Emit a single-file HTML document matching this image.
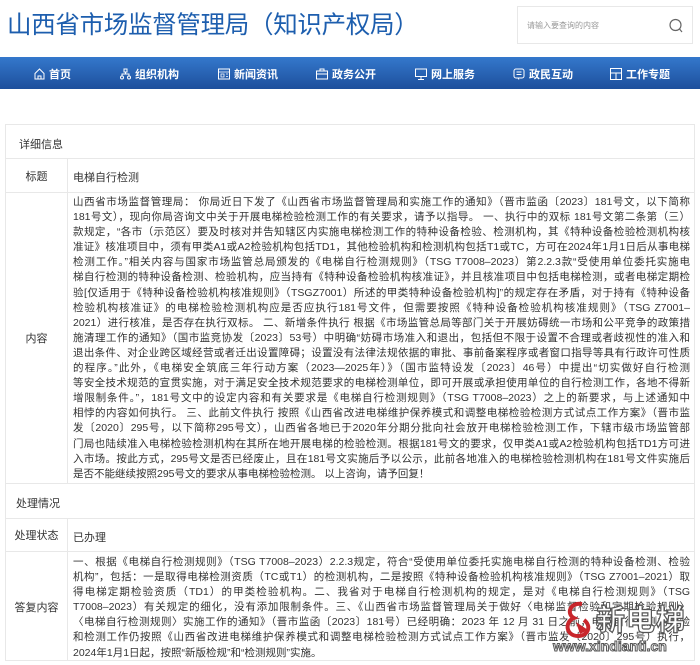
<!DOCTYPE html>
<html><head><meta charset="utf-8">
<style>
*{margin:0;padding:0;box-sizing:border-box}
body{width:700px;height:665px;background:#fff;font-family:"Liberation Sans","Noto Sans CJK SC",sans-serif;color:#333;position:relative;overflow:hidden}
.title{position:absolute;left:7px;top:6px;font-size:24.5px;color:#1d5eae;letter-spacing:-0.3px;font-weight:normal;white-space:nowrap}
.search{position:absolute;left:517px;top:6px;width:176px;height:38px;border:1px solid #e8e8e8;background:#fff}
.search span{position:absolute;left:9px;top:13px;font-size:8px;color:#999}
.search svg{position:absolute;left:150px;top:10px}
.nav{position:absolute;left:0;top:57px;width:700px;height:32px;background:linear-gradient(#3478cc,#1d4f9c);}
.nav .it{position:absolute;top:9px;color:#fff;font-size:11px;font-weight:bold;white-space:nowrap;display:flex;align-items:center;gap:4px}
.nav svg{display:block}
.box{position:absolute;left:5px;top:124px;width:690px;height:537px;border:1px solid #e8e8e8}
.row{position:absolute;left:0;width:688px;border-bottom:1px solid #e8e8e8}
.lab{position:absolute;left:0;top:0;bottom:0;width:62px;border-right:1px solid #e8e8e8;font-size:11px;display:flex;align-items:center;justify-content:center}
.val{position:absolute;left:67px;right:4px;font-size:11px}
.txt{font-size:10.5px}
.txt div{white-space:nowrap;text-align:justify;text-align-last:justify;height:15.1px;line-height:15.1px;overflow:hidden}
.txt div.l{text-align-last:left}
.hdr{font-size:11px;position:absolute;left:13px}
.wm1{position:absolute;left:596px;top:597px;font-size:29px;font-weight:bold;color:#fff;-webkit-text-stroke:1.2px #555;letter-spacing:1px}
.wm2{position:absolute;left:553px;top:638px;font-size:14px;font-weight:bold;color:#fff;-webkit-text-stroke:1px #555}
</style></head><body>
<div class="title">山西省市场监督管理局（知识产权局）</div>
<div class="search"><span>请输入要查询的内容</span>
<svg width="16" height="18" viewBox="0 0 16 18"><circle cx="7.5" cy="8" r="5.5" fill="none" stroke="#666" stroke-width="1.2"/><line x1="11.5" y1="12" x2="14" y2="15" stroke="#666" stroke-width="1.2"/></svg></div>
<div class="nav">
<div class="it" style="left:34px"><svg width="11" height="12" viewBox="0 0 11 12"><path d="M1 5.5L5.5 1L10 5.5V11H1Z M4 11V8H7V11" fill="none" stroke="#fff" stroke-width="1"/></svg>首页</div>
<div class="it" style="left:120px"><svg width="11" height="12" viewBox="0 0 11 12"><rect x="4" y="1" width="3" height="3" fill="none" stroke="#fff"/><path d="M5.5 4V6M2 8V6H9V8" fill="none" stroke="#fff"/><circle cx="2" cy="9.5" r="1.5" fill="none" stroke="#fff"/><circle cx="9" cy="9.5" r="1.5" fill="none" stroke="#fff"/></svg>组织机构</div>
<div class="it" style="left:218px"><svg width="12" height="12" viewBox="0 0 12 12"><rect x="0.5" y="1" width="11" height="10" fill="none" stroke="#fff"/><path d="M0.5 4H11.5M3 6H6V9H3ZM8 6H10M8 8.5H10" fill="none" stroke="#fff" stroke-width="0.8"/></svg>新闻资讯</div>
<div class="it" style="left:316px"><svg width="12" height="12" viewBox="0 0 12 12"><rect x="0.5" y="3" width="11" height="8" fill="none" stroke="#fff"/><path d="M4 3V1H8V3M0.5 6H11.5" fill="none" stroke="#fff"/></svg>政务公开</div>
<div class="it" style="left:415px"><svg width="12" height="12" viewBox="0 0 12 12"><rect x="0.5" y="1" width="11" height="7.5" fill="none" stroke="#fff"/><path d="M6 8.5V11M3 11.5H9" fill="none" stroke="#fff"/></svg>网上服务</div>
<div class="it" style="left:513px"><svg width="12" height="12" viewBox="0 0 12 12"><rect x="1" y="1" width="10" height="9" rx="2" fill="none" stroke="#fff"/><path d="M3.5 4H8.5M3.5 6.5H8.5M5 10L6 11.5" fill="none" stroke="#fff" stroke-width="0.9"/></svg>政民互动</div>
<div class="it" style="left:610px"><svg width="12" height="12" viewBox="0 0 12 12"><rect x="0.5" y="0.5" width="11" height="11" fill="none" stroke="#fff"/><path d="M0.5 5H11.5M6 5V11.5" fill="none" stroke="#fff"/></svg>工作专题</div>
</div>

<div class="box">
<div class="row" style="top:0;height:34px"><div class="hdr" style="top:11px">详细信息</div></div>
<div class="row" style="top:34px;height:34px"><div class="lab">标题</div><div class="val" style="top:10px">电梯自行检测</div></div>
<div class="row" style="top:68px;height:291px"><div class="lab">内容</div>
<div class="val txt" style="top:2px">
<div>山西省市场监督管理局： 你局近日下发了《山西省市场监督管理局和实施工作的通知》（晋市监函〔2023〕181号文，以下简称</div>
<div>181号文），现向你局咨询文中关于开展电梯检验检测工作的有关要求，请予以指导。 一、执行中的双标 181号文第二条第（三）</div>
<div>款规定，“各市（示范区）要及时核对并告知辖区内实施电梯检测工作的特种设备检验、检测机构，其《特种设备检验检测机构核</div>
<div>准证》核准项目中，须有甲类A1或A2检验机构包括TD1，其他检验机构和检测机构包括T1或TC，方可在2024年1月1日后从事电梯</div>
<div>检测工作。”相关内容与国家市场监管总局颁发的《电梯自行检测规则》（TSG T7008–2023）第2.2.3款“受使用单位委托实施电</div>
<div>梯自行检测的特种设备检测、检验机构，应当持有《特种设备检验机构核准证》，并且核准项目中包括电梯检测，或者电梯定期检</div>
<div>验[仅适用于《特种设备检验机构核准规则》（TSGZ7001）所述的甲类特种设备检验机构]”的规定存在矛盾，对于持有《特种设备</div>
<div>检验机构核准证》的电梯检验检测机构应是否应执行181号文件，但需要按照《特种设备检验机构核准规则》（TSG Z7001–</div>
<div>2021）进行核准，是否存在执行双标。 二、新增条件执行 根据《市场监管总局等部门关于开展妨碍统一市场和公平竞争的政策措</div>
<div>施清理工作的通知》（国市监竞协发〔2023〕53号）中明确“妨碍市场准入和退出，包括但不限于设置不合理或者歧视性的准入和</div>
<div>退出条件、对企业跨区域经营或者迁出设置障碍；设置没有法律法规依据的审批、事前备案程序或者窗口指导等具有行政许可性质</div>
<div>的程序。”此外，《电梯安全筑底三年行动方案（2023—2025年）》（国市监特设发〔2023〕46号）中提出“切实做好自行检测</div>
<div>等安全技术规范的宣贯实施，对于满足安全技术规范要求的电梯检测单位，即可开展或承担使用单位的自行检测工作，各地不得新</div>
<div>增限制条件。”，181号文中的设定内容和有关要求是《电梯自行检测规则》（TSG T7008–2023）之上的新要求，与上述通知中</div>
<div>相悖的内容如何执行。 三、此前文件执行 按照《山西省改进电梯维护保养模式和调整电梯检验检测方式试点工作方案》（晋市监</div>
<div>发〔2020〕295号，以下简称295号文），山西省各地已于2020年分期分批向社会放开电梯检验检测工作，下辖市级市场监管部</div>
<div>门局也陆续准入电梯检验检测机构在其所在地开展电梯的检验检测。根据181号文的要求，仅甲类A1或A2检验机构包括TD1方可进</div>
<div>入市场。按此方式，295号文是否已经废止，且在181号文实施后予以公示，此前各地准入的电梯检验检测机构在181号文件实施后</div>
<div class="l">是否不能继续按照295号文的要求从事电梯检验检测。 以上咨询，请予回复！</div>
</div></div>
<div class="row" style="top:359px;height:35px"><div class="hdr" style="top:11px;left:10px">处理情况</div></div>
<div class="row" style="top:394px;height:33px"><div class="lab">处理状态</div><div class="val" style="top:10px">已办理</div></div>
<div class="row" style="top:427px;height:109px;border-bottom:none"><div class="lab">答复内容</div>
<div class="val txt" style="top:3px">
<div>一、根据《电梯自行检测规则》（TSG T7008–2023）2.2.3规定，符合“受使用单位委托实施电梯自行检测的特种设备检测、检验</div>
<div>机构”，包括：一是取得电梯检测资质（TC或T1）的检测机构，二是按照《特种设备检验机构核准规则》（TSG Z7001–2021）取</div>
<div>得电梯定期检验资质（TD1）的甲类检验机构。二、我省对于电梯自行检测机构的规定，是对《电梯自行检测规则》（TSG</div>
<div>T7008–2023）有关规定的细化，没有添加限制条件。三、《山西省市场监督管理局关于做好〈电梯监督检验和定期检验规则〉</div>
<div>〈电梯自行检测规则〉实施工作的通知》（晋市监函〔2023〕181号）已经明确：2023 年 12 月 31 日之前，电梯自行检测的检验</div>
<div>和检测工作仍按照《山西省改进电梯维护保养模式和调整电梯检验检测方式试点工作方案》（晋市监发〔2020〕295号）执行，</div>
<div class="l">2024年1月1日起，按照“新版检规”和“检测规则”实施。</div>
</div></div>
</div>
<svg style="position:absolute;left:562px;top:600px" width="34" height="40" viewBox="0 0 34 40"><path d="M20 4C8 2 4 14 12 18C2 22 4 36 16 36C26 36 30 26 22 20" fill="none" stroke="#c8262c" stroke-width="4"/><path d="M14 22L26 30L18 34Z" fill="#c8262c"/></svg>
<div class="wm1">新电梯</div>
<div class="wm2">www.xindianti.cn</div>
</body></html>
